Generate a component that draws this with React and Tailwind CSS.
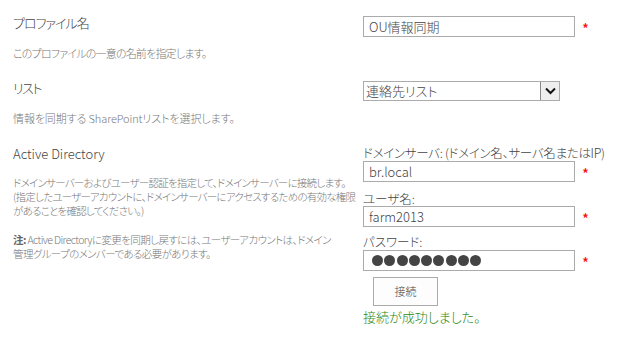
import React from "react";

const font = "[font-family:'Noto_Sans_CJK_JP',sans-serif] [font-feature-settings:'palt'] font-light";

function Star() {
  return <span className="ml-[7px] text-[15px] leading-none font-normal text-[#ff0000] self-center mt-[4px]">*</span>;
}

function Input({ children }) {
  return (
    <div className="flex items-center">
      <div className="w-[212px] h-[21px] border border-[#ababab] bg-white flex items-center px-[5px] text-[13px] text-[#444]">
        {children}
      </div>
      <Star />
    </div>
  );
}

export default function App() {
  return (
    <div className={`${font} w-[621px] h-[337px] bg-white pl-[13px] text-[#444] overflow-hidden`}>
      {/* Section 1 */}
      <div className="flex pt-[12px]">
        <div className="w-[350px]">
          <div className="text-[13px] leading-[20px] text-[#444] tracking-[-1px] pt-[1px]">プロファイル名</div>
          <div className="mt-[12px] text-[11px] leading-[16px] text-[#777] tracking-[-0.8px]">このプロファイルの一意の名前を指定します。</div>
        </div>
        <div className="pt-[4px]">
          <Input>OU情報同期</Input>
        </div>
      </div>
      {/* Section 2 */}
      <div className="flex pt-[17px]">
        <div className="w-[350px]">
          <div className="text-[13px] leading-[20px] text-[#444] tracking-[-1.5px]">リスト</div>
          <div className="mt-[12px] text-[11px] leading-[16px] text-[#777] tracking-[-0.1px]">情報を同期する SharePointリストを選択します。</div>
        </div>
        <div className="pt-[3px]">
          <div className="w-[197px] h-[20px] border border-[#ababab] bg-white flex items-center text-[13px] text-[#444]">
            <span className="pl-[2px] flex-1">連絡先リスト</span>
            <div className="w-[19px] h-[18px] bg-[#eeeeee] border-l border-[#888] flex items-center justify-center">
              <svg width="11" height="8" viewBox="0 0 11 8">
                <path d="M1 1.5 L5.5 6 L10 1.5" fill="none" stroke="#111" strokeWidth="2" />
              </svg>
            </div>
          </div>
        </div>
      </div>
      {/* Section 3 */}
      <div className="flex pt-[18px]">
        <div className="w-[350px]">
          <div className="text-[13px] leading-[20px] text-[#444]">Active Directory</div>
          <div className="mt-[12px] text-[10.5px] leading-[14px] text-[#777] whitespace-nowrap tracking-[-0.75px]">
            <div>ドメインサーバーおよびユーザー認証を指定して、ドメインサーバーに接続します。</div>
            <div>(指定したユーザーアカウントに、ドメインサーバーにアクセスするための有効な権限</div>
            <div>があることを確認してください。)</div>
          </div>
          <div className="mt-[15px] text-[10.5px] leading-[14px] text-[#777] whitespace-nowrap tracking-[-0.6px]">
            <div><span className="font-bold text-[#666]">注:</span> Active Directoryに変更を同期し戻すには、ユーザーアカウントは、ドメイン</div>
            <div>管理グループのメンバーである必要があります。</div>
          </div>
        </div>
        <div className="pt-[2px]">
          <div className="text-[12.5px] leading-[14px] text-[#444] whitespace-nowrap tracking-[-0.3px]">ドメインサーバ: (ドメイン名、サーバ名またはIP)</div>
          <div className="mt-[1px]"><Input>br.local</Input></div>
          <div className="mt-[10px] text-[12.5px] leading-[14px] text-[#444]">ユーザ名:</div>
          <div className="mt-[0px]"><Input>farm2013</Input></div>
          <div className="mt-[8px] text-[12.5px] leading-[14px] text-[#444]">パスワード:</div>
          <div className="mt-[1px]">
            <Input>
              <div className="flex gap-[1.3px] pl-[3px]">
                {Array.from({ length: 9 }).map((_, i) => (
                  <span key={i} className="w-[11px] h-[11px] rounded-full bg-[#444] inline-block" />
                ))}
              </div>
            </Input>
          </div>
          <div className="mt-[6px] ml-[10px] w-[65px] h-[29px] border border-[#ababab] bg-[#fdfdfd] flex items-center justify-center text-[11px] text-[#444]">接続</div>
          <div className="mt-[3px] text-[13px] leading-[16px] text-[#2d8a14]">接続が成功しました。</div>
        </div>
      </div>
    </div>
  );
}
